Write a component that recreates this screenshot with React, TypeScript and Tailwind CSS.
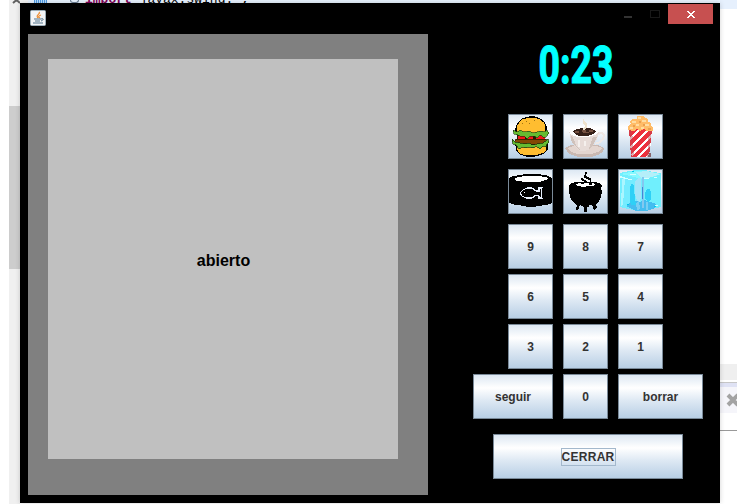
import type { ReactNode } from "react";

const buttonBase =
  "flex h-[45px] items-center justify-center border border-[#7a8a99] bg-[linear-gradient(180deg,#dde8f3_0%,#ffffff_30%,#dde8f3_60%,#b8cfe5_100%)] font-['Liberation_Sans',Arial,sans-serif] text-xs font-bold text-[#333333]";

function Key({ children, className = "w-[45px]" }: { children: ReactNode; className?: string }) {
  return <button className={`${buttonBase} ${className}`}>{children}</button>;
}

function Icon({ children }: { children: ReactNode }) {
  return (
    <svg viewBox="1 1 43 43" className="block h-[43px] w-[43px] shrink-0" shapeRendering="crispEdges">
      {children}
    </svg>
  );
}

function Burger() {
  return (
    <Icon>
      <path d="M8 19V14L9 11 11 8 14 5 18 4 21 3H27L32 5 36 8 38 12V18L35 20H10Z" fill="#ffbd30" stroke="#000" strokeWidth="1.2" />
      <path d="M8 31H39V36L36 39 31 41 26 42H18L12 40 9 37Z" fill="#ffbd30" stroke="#000" strokeWidth="1.2" />
      <path d="M9 20H37V27H9Z" fill="#241800" />
      <path d="M10 22H17V25H10ZM20 22H25V25H20ZM28 21H37V25H28Z" fill="#f21818" />
      <path d="M5 16 9 18 12 16 16 18 21 17 25 19 29 18 33 17 36 18 39 16 41 19 38 23 35 23 32 21 29 24 26 22 22 22 19 25 16 22 12 22 10 21 6 20Z" fill="#65bb31" stroke="#173008" strokeWidth="0.6" />
      <path d="M8 25H38L40 28 37 30H8L6 28Z" fill="#834804" stroke="#321a00" strokeWidth="0.8" />
      <path d="M4 25 7 28 12 29 17 30 21 29 24 31 29 30 35 29 40 25 41 28 39 30 38 33 35 32 32 35 28 32 25 34 20 33 17 34 14 33 11 35 8 31 5 30Z" fill="#65bb31" stroke="#173008" strokeWidth="0.7" />
      <path d="M18 7h1v1h-1ZM21 9h1v1h-1ZM26 6h1v1h-1ZM14 9h1v1h-1Z" fill="#a27511" />
    </Icon>
  );
}

function Coffee() {
  return (
    <Icon>
      <path d="M2 34 8 31H35L41 34 40 38 35 41 28 43H15L6 40Z" fill="#cab9b2" />
      <path d="M4 34 10 32H34L39 34 35 38 28 40H15L8 38Z" fill="#e3d5cf" />
      <path d="M34 20 39 19 41 21 40 25 37 28 32 30" fill="none" stroke="#eee8e5" strokeWidth="2" />
      <path d="M6 17 9 14 17 12H27L34 15 36 18 34 25 31 30 27 35 22 37H17L12 33 8 26Z" fill="#e7dcd8" />
      <path d="M8 22 10 24 14 33 18 36H16L11 31 8 26ZM30 23H34L30 31 26 35 28 29Z" fill="#d0c2bb" />
      <path d="M6 17 9 14 17 12H27L34 15 36 18 32 21 25 23H15L8 21Z" fill="#fffefe" />
      <path d="M10 17 14 15 20 14H27L33 17 30 20 24 22H16L12 20Z" fill="#352018" />
      <path d="M12 17h4v2h-4ZM19 16h4v2h3v1h-6ZM26 16h4v2h-4Z" fill="#745040" />
      <path d="M20 4 22 8 24 10V13L21 17 20 14 22 12 20 9Z" fill="#eee2cc" />
      <path d="M15 26h2v7h-2ZM21 27h2v5h-2Z" fill="#f5f0ed" />
    </Icon>
  );
}

function Popcorn() {
  return (
    <Icon>
      <path d="M11 15H34L31 43H13Z" fill="#ec303c" />
      <path d="M12 23 20 15H23L12 26ZM12 32 29 15H32L13 35ZM13 40 33 20V23L14 42ZM18 43 33 28V31L21 43ZM27 43 32 38V41L30 43Z" fill="#fff" />
      <path d="M11 15H14L16 43H13ZM31 15H34L31 43H29Z" fill="#bd4952" opacity=".45" />
      <path d="M10 16V12L13 10 12 7 15 5 19 5V2H25L27 4 30 5V8L33 9V12L35 14V17H28L26 15 22 17 19 15 16 17Z" fill="#ffbc68" />
      <path d="M20 3h3v2h-3ZM14 7h4v2h-4ZM24 6h4v2h-4ZM18 10h3v2h-3ZM27 10h4v2h-4ZM12 13h3v2h-3ZM23 13h3v2h-3Z" fill="#ffdda1" />
      <path d="M21 7h2v2h-2ZM15 11h2v2h-2ZM25 10h2v2h-2ZM30 14h3v2h-3Z" fill="#eaa04e" />
      <path d="M31 39h2v4h-3Z" fill="#87646b" />
    </Icon>
  );
}

function Can() {
  return (
    <Icon>
      <path d="M1 9 5 7 12 6 18 5H28L38 6 44 9V34L39 36 28 37V38H18V37L7 36 1 34Z" fill="#000" />
      <path d="M6 10 10 8 17 7H30L38 8 40 10 35 12 30 13H18L9 12Z" fill="#fff" />
      <path d="M18 6h10v1h-10Z" fill="#000" />
      <path d="M12 24 15 21 19 19H24L28 22 31 22 31 19H34L33 24 34 29H31V27L28 26 24 29H18L14 27Z" fill="#000" stroke="#e6eefb" strokeWidth="1.1" />
      <path d="M16 23h1v1h-1Z" fill="#fff" />
    </Icon>
  );
}

function Cauldron() {
  return (
    <Icon>
      <path d="M6 17 7 15 12 13H33L38 15 39 17 38 19 39 22 38 28 36 32 33 35 34 39 31 41 29 36H26V38H24V43H21V38L17 36 15 41H13L14 36 10 33 7 28 6 22Z" fill="#000" />
      <path d="M12 15 18 14H29L33 15 30 17H25L20 18 15 17Z" fill="#fff" />
      <path d="M22 3h2v2h-1v2h1v1h2v1h2v5h-1v-3h-2v-1h-2v-1h-2V6h1ZM18 9h2v1h1v1h2v1h1v1h-3v-1h-2Z" fill="#000" />
      <path d="M18 14h3v1h-3ZM26 14h3v2h-3Z" fill="#000" />
    </Icon>
  );
}

function IceCube() {
  return (
    <Icon>
      <path d="M2 4 11 2 18 1H27L35 3 43 4V38L38 39 28 42H21L10 40 2 38Z" fill="#70effd" />
      <path d="M2 5 17 2H29L43 5 34 8 25 10 12 7Z" fill="#87f8ff" />
      <path d="M18 3 29 2 42 5 30 9 23 9Z" fill="#b4eff9" />
      <path d="M3 9 11 7 25 11V38L15 41 3 38Z" fill="#75ecff" />
      <path d="M8 37 12 34 18 32 22 33 27 31 38 35 37 39 28 42H18Z" fill="#45bdf0" />
      <path d="M12 32V18L14 14 16 17 17 33 20 36 13 36ZM27 30V24L29 20H32L33 24V30L30 33Z" fill="#2fd0f6" />
      <path d="M17 26V12L20 9H23V29L21 34 19 31Z" fill="#a4e4f8" />
      <path d="M24 8h2v31h-2Z" fill="#83c8f0" />
      <path d="M24 18h1v12h-1Z" fill="#4088d6" />
      <path d="M4 10 7 8 6 24 5 35 3 38Z" fill="#abf6ff" />
      <path d="M2 7h2v1h3v1h3v1h4v1h-4v-1H6V9H2ZM36 8h3v1h-3ZM12 5h6v1h-6ZM26 9h5v1h-5ZM37 36h3v1h-3Z" fill="#d6ffff" />
      <path d="M18 34 21 32 22 40 19 41ZM28 33h2v8h-2Z" fill="#79cff3" />
      <path d="M9 35h2v1H9ZM14 2h2v1h-2ZM36 37h2v1h-2Z" fill="#00c7e8" />
    </Icon>
  );
}

function EditorBackdrop() {
  return (
    <div className="flex h-full w-full bg-white">
      <div className="w-[9px] shrink-0" />
      <div className="flex w-[11px] shrink-0 flex-col bg-[#f0f0f0]">
        <svg viewBox="0 0 11 6" className="h-[6px] w-[11px] shrink-0" fill="none" stroke="#606060" strokeWidth="2">
          <path d="M4 3 7.5 0 11 3" />
        </svg>
        <div className="mt-[100px] h-[163px] shrink-0 bg-[#cdcdcd]" />
      </div>
      <div className="flex h-[3px] w-[700px] shrink-0 items-end overflow-hidden bg-[linear-gradient(90deg,#f4f4f4_0_8px,#e8f2fe_8px)]">
        <span className="ml-[14px] h-[3px] w-[13px] shrink-0 bg-[repeating-linear-gradient(90deg,#4e97df_0_1px,#b9dfff_1px_2px)]" />
        <span className="ml-[23px] h-[3px] w-[9px] shrink-0 rounded-b-full border border-t-0 border-[#697c91]" />
        <span className="mb-[-4px] ml-[6px] whitespace-pre font-['Liberation_Mono','Courier_New',monospace] text-[13px] leading-[14px]">
          <b className="text-[#7f0055]">import</b> javax.swing.*;
        </span>
      </div>
      <div className="flex w-[17px] shrink-0 flex-col">
        <div className="h-[9px] bg-[#e6f0fd]" />
        <div className="h-[355px]" />
        <div className="h-4 bg-[#efefef]" />
        <div className="mt-0.5 h-px bg-[#c6c6c6]" />
        <div className="h-1 bg-[#dfe2f4]" />
        <div className="flex h-[26px] items-center overflow-hidden bg-[#f5f5fa] pl-[6px]">
          <svg viewBox="0 0 14 14" className="h-[14px] w-[14px] shrink-0" fill="none" stroke="#a3a3a3" strokeWidth="4">
            <path d="M2 2 12 12M12 2 2 12" />
          </svg>
        </div>
        <div className="mt-[17px] h-px bg-[#999999]" />
      </div>
    </div>
  );
}

function TitleBar() {
  return (
    <header className="flex h-[31px] shrink-0 justify-between pl-[10px] pr-[7px]">
      <svg viewBox="0 0 16 16" className="mt-[7px] h-4 w-4">
        <rect x=".5" y=".5" width="15" height="15" rx="1" fill="#f2f4f6" stroke="#9badb8" />
        <path d="M9 2c2 2-4 3-1 6M11 5c-3 1-3 2-1 3" stroke="#ed8b2e" strokeWidth="1.2" fill="none" />
        <path d="M4 9h7M5 11h5M3 13h10M11 9c3-1 3 1 0 2" stroke="#53758c" fill="none" />
      </svg>
      <div className="flex h-5 pt-px">
        <div className="flex w-11 justify-center pt-3">
          <span className="h-0.5 w-2 bg-[#333333]" />
        </div>
        <div className="mr-[8px] mt-[6px] h-2 w-[10px] border border-[#191919]" />
        <button className="flex h-5 w-[45px] items-center justify-center bg-[#c75050]">
          <svg viewBox="0 0 8 7" className="mt-px h-[7px] w-2" shapeRendering="crispEdges" fill="none" stroke="#fff" strokeWidth="1.6">
            <path d="M.5 0 7.5 7M7.5 0 .5 7" />
          </svg>
        </button>
      </div>
    </header>
  );
}

export default function App() {
  return (
    <div className="relative h-[504px] w-[737px] overflow-hidden">
      <EditorBackdrop />
      <main className="absolute left-5 top-[3px] flex h-[500px] w-[700px] flex-col bg-black shadow-[0_0_5px_rgba(0,0,0,0.18)]">
        <TitleBar />
        <div className="flex pl-2">
          <section className="h-[461px] w-[400px] shrink-0 bg-[#808080] pl-5 pt-[25px]">
            <div className="flex h-[400px] w-[350px] items-center justify-center bg-[#c0c0c0] pl-px pt-[3px] font-['Liberation_Sans',Arial,sans-serif] text-base font-bold text-black">
              abierto
            </div>
          </section>
          <section className="flex w-[275px] flex-col pl-[45px]">
            <div className="flex h-20 w-[207px] justify-center pt-0.5">
              <span className="h-[60px] origin-center scale-x-[.72] whitespace-nowrap font-['Roboto',sans-serif] text-[52px] font-bold leading-[60px] text-[#00ffff] [-webkit-text-stroke:1.2px_#00ffff]">
                0:23
              </span>
            </div>
            <div className="ml-[35px] grid w-[155px] grid-cols-3 gap-[10px]">
              <Key><Burger /></Key>
              <Key><Coffee /></Key>
              <Key><Popcorn /></Key>
              <Key><Can /></Key>
              <Key><Cauldron /></Key>
              <Key><IceCube /></Key>
            </div>
            <div className="ml-[35px] mt-[10px] grid w-[155px] grid-cols-3 gap-x-[10px] gap-y-[5px]">
              {[9, 8, 7, 6, 5, 4, 3, 2, 1].map((n) => (
                <Key key={n}>{n}</Key>
              ))}
            </div>
            <div className="mt-[5px] flex gap-[10px]">
              <Key className="w-[80px]">seguir</Key>
              <Key>0</Key>
              <Key className="w-[85px]">borrar</Key>
            </div>
            <Key className="ml-5 mt-[15px] w-[190px]">
              <span className="flex h-[18px] w-[55px] items-center justify-center border border-[#a3b8cc] tracking-[.3px]">CERRAR</span>
            </Key>
          </section>
        </div>
      </main>
    </div>
  );
}
